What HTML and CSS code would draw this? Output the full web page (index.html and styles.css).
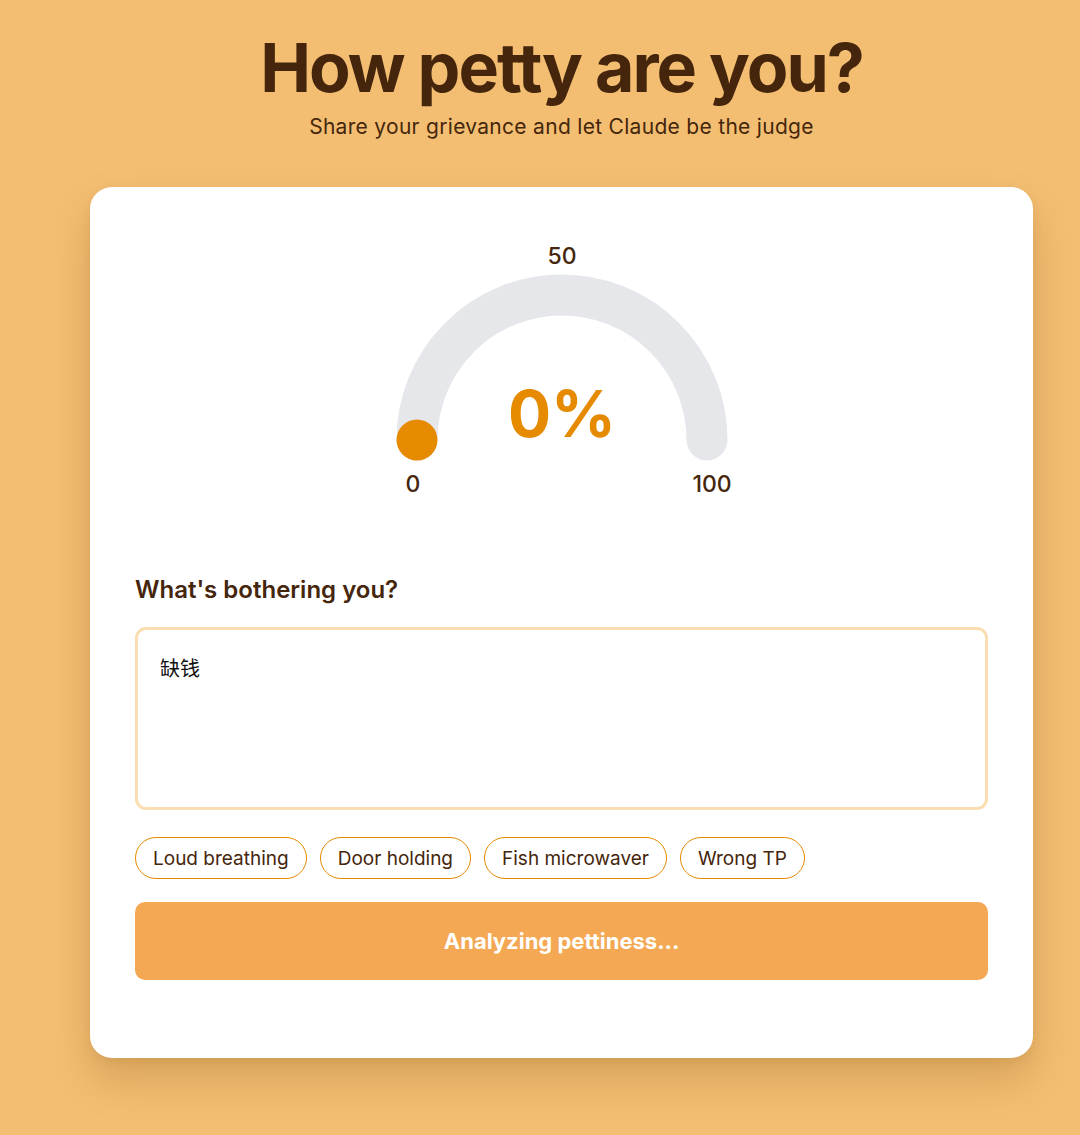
FILE: index.html
```html
<!DOCTYPE html>
<html lang="en">
<head>
<meta charset="utf-8">
<title>How petty are you?</title>
<link rel="stylesheet" href="styles.css">
</head>
<body>
<main class="page">
  <header class="hero">
    <h1 class="title">How petty are you?</h1>
    <p class="subtitle">Share your grievance and let Claude be the judge</p>
  </header>
  <section class="card">
    <div class="gauge">
      <svg class="gauge-svg" width="360" height="262" viewBox="0 0 360 262">
        <path d="M 35 205 A 145 145 0 0 1 325 205" fill="none" stroke="#E5E7EB" stroke-width="41" stroke-linecap="round"/>
        <circle cx="35" cy="205" r="20.5" fill="#E68A00"/>
        <text class="g-label" x="180" y="29" text-anchor="middle">50</text>
        <text class="g-value" x="180" y="202" text-anchor="middle">0%</text>
        <text class="g-label" x="31" y="257" text-anchor="middle">0</text>
        <text class="g-label" x="330" y="257" text-anchor="middle">100</text>
      </svg>
    </div>
    <label class="field-label" for="grievance">What's bothering you?</label>
    <textarea id="grievance" class="grievance">缺钱</textarea>
    <div class="chips">
      <button class="chip">Loud breathing</button>
      <button class="chip">Door holding</button>
      <button class="chip">Fish microwaver</button>
      <button class="chip">Wrong TP</button>
    </div>
    <button class="submit">Analyzing pettiness...</button>
  </section>
</main>
</body>
</html>
```

FILE: styles.css
```css
* { box-sizing: border-box; }

html, body {
  margin: 0;
  padding: 0;
}

body {
  background: #F3BE72;
  font-family: Inter, "Noto Sans", "Noto Sans CJK SC", sans-serif;
  color: #45260C;
  min-height: 1135px;
}

.page {
  display: flex;
  flex-direction: column;
  align-items: center;
  padding-top: 31px;
  padding-left: 43px;
}

.hero {
  text-align: center;
}

.title {
  margin: 0;
  font-size: 68px;
  line-height: 72px;
  font-weight: 700;
  letter-spacing: -2px;
  color: #45260C;
}

.subtitle {
  margin: 10px 0 0;
  font-size: 21px;
  line-height: 28px;
  letter-spacing: 0.3px;
  color: #45260C;
}

.card {
  margin-top: 46px;
  width: 943px;
  background: #fff;
  border-radius: 22px;
  padding: 48px 45px 78px;
  box-shadow: 0 22px 40px rgba(120, 70, 10, 0.22), 0 4px 10px rgba(120, 70, 10, 0.08);
  display: flex;
  flex-direction: column;
}

.gauge {
  display: flex;
  justify-content: center;
  height: 262px;
}

.gauge-svg {
  display: block;
  overflow: visible;
}

.g-label {
  font-family: Inter, sans-serif;
  font-size: 23px;
  font-weight: 500;
  fill: #45260C;
}

.g-value {
  font-family: Inter, sans-serif;
  font-size: 64px;
  font-weight: 700;
  fill: #E68A00;
}

.field-label {
  margin-top: 77px;
  font-size: 24px;
  line-height: 32px;
  font-weight: 600;
  color: #45260C;
}

.grievance {
  margin-top: 21px;
  width: 100%;
  height: 183px;
  border: 3px solid #FADDB0;
  border-radius: 11px;
  padding: 25px 22px 20px;
  font-family: Inter, "Noto Sans CJK SC", sans-serif;
  font-size: 20px;
  line-height: 28px;
  color: #111;
  resize: none;
  outline: none;
}

.chips {
  margin-top: 27px;
  display: flex;
  gap: 13px;
}

.chip {
  height: 42px;
  padding: 0 17px;
  border: 1.5px solid #E68A00;
  border-radius: 999px;
  background: #fff;
  font-family: Inter, sans-serif;
  font-size: 19px;
  color: #45260C;
}

.submit {
  margin-top: 23px;
  height: 78px;
  width: 100%;
  border: none;
  border-radius: 10px;
  background: #F4A853;
  color: #fff;
  font-family: Inter, sans-serif;
  font-size: 22px;
  font-weight: 700;
}
```
